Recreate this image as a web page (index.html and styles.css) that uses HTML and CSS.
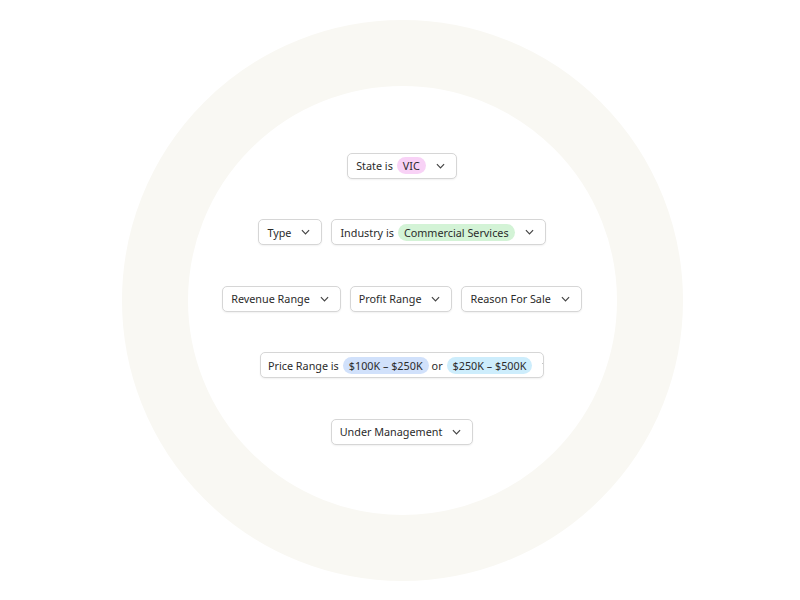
FILE: index.html
```html
<!DOCTYPE html>
<html lang="en">
<head>
    <meta charset="UTF-8">
    <meta name="viewport" content="width=device-width, initial-scale=1.0">
    <title>Filters</title>
    <link rel="stylesheet" href="styles.css">
</head>
<body>
    <div class="ring">
        <div class="filters">
            <div class="row">
                <button class="chip">State is <span class="pill pink">VIC</span><svg class="chev" viewBox="0 0 10 6"><path d="M1 1l4 4 4-4"/></svg></button>
            </div>
            <div class="row">
                <button class="chip">Type<svg class="chev" viewBox="0 0 10 6"><path d="M1 1l4 4 4-4"/></svg></button>
                <button class="chip">Industry is <span class="pill green">Commercial Services</span><svg class="chev" viewBox="0 0 10 6"><path d="M1 1l4 4 4-4"/></svg></button>
            </div>
            <div class="row">
                <button class="chip">Revenue Range<svg class="chev" viewBox="0 0 10 6"><path d="M1 1l4 4 4-4"/></svg></button>
                <button class="chip">Profit Range<svg class="chev" viewBox="0 0 10 6"><path d="M1 1l4 4 4-4"/></svg></button>
                <button class="chip">Reason For Sale<svg class="chev" viewBox="0 0 10 6"><path d="M1 1l4 4 4-4"/></svg></button>
            </div>
            <div class="row">
                <button class="chip clipped">Price Range is <span class="pill blue">$100K – $250K</span> or <span class="pill cyan">$250K – $500K</span><svg class="chev" viewBox="0 0 10 6"><path d="M1 1l4 4 4-4"/></svg></button>
            </div>
            <div class="row">
                <button class="chip">Under Management<svg class="chev" viewBox="0 0 10 6"><path d="M1 1l4 4 4-4"/></svg></button>
            </div>
        </div>
    </div>
</body>
</html>
```

FILE: styles.css
```css
body {
    margin: 0;
    height: 600px;
    display: flex;
    align-items: center;
    justify-content: center;
    background-color: #fff;
    font-family: "Noto Sans", "Open Sans", sans-serif;
    padding-left: 4px;
    box-sizing: border-box;
}
.ring {
    width: 561px;
    height: 561px;
    box-sizing: border-box;
    border: 66px solid #f9f8f3;
    border-radius: 50%;
    display: flex;
    align-items: center;
    justify-content: center;
}
.filters {
    display: flex;
    flex-direction: column;
    gap: 40.5px;
    margin-top: -3px;
}
.row {
    display: flex;
    justify-content: center;
    gap: 9px;
}
.chip {
    height: 26px;
    display: flex;
    align-items: center;
    white-space: nowrap;
    padding: 0 11px 0 8px;
    border: 1px solid #d6d6d6;
    border-radius: 5px;
    background: #fff;
    box-shadow: 0 1px 2px rgba(0, 0, 0, 0.06);
    font-family: inherit;
    font-size: 10.8px;
    color: #2b2b2b;
    cursor: pointer;
}
.chip.clipped {
    max-width: 284px;
    overflow: hidden;
    padding-left: 7px;
}
.pill {
    display: inline-block;
    margin: 0 3px 0 4px;
    padding: 0 6px;
    line-height: 17px;
    border-radius: 9px;
}
.pink { background: #f8d2f6; }
.green { background: #d3f3d6; }
.blue { background: #d1e1fb; }
.cyan { background: #cdedfc; }
.chev {
    width: 9px;
    height: 6px;
    margin-left: 10px;
    flex-shrink: 0;
    fill: none;
    stroke: #444;
    stroke-width: 1.3;
}
.pill + .chev {
    margin-left: 7px;
}
```
